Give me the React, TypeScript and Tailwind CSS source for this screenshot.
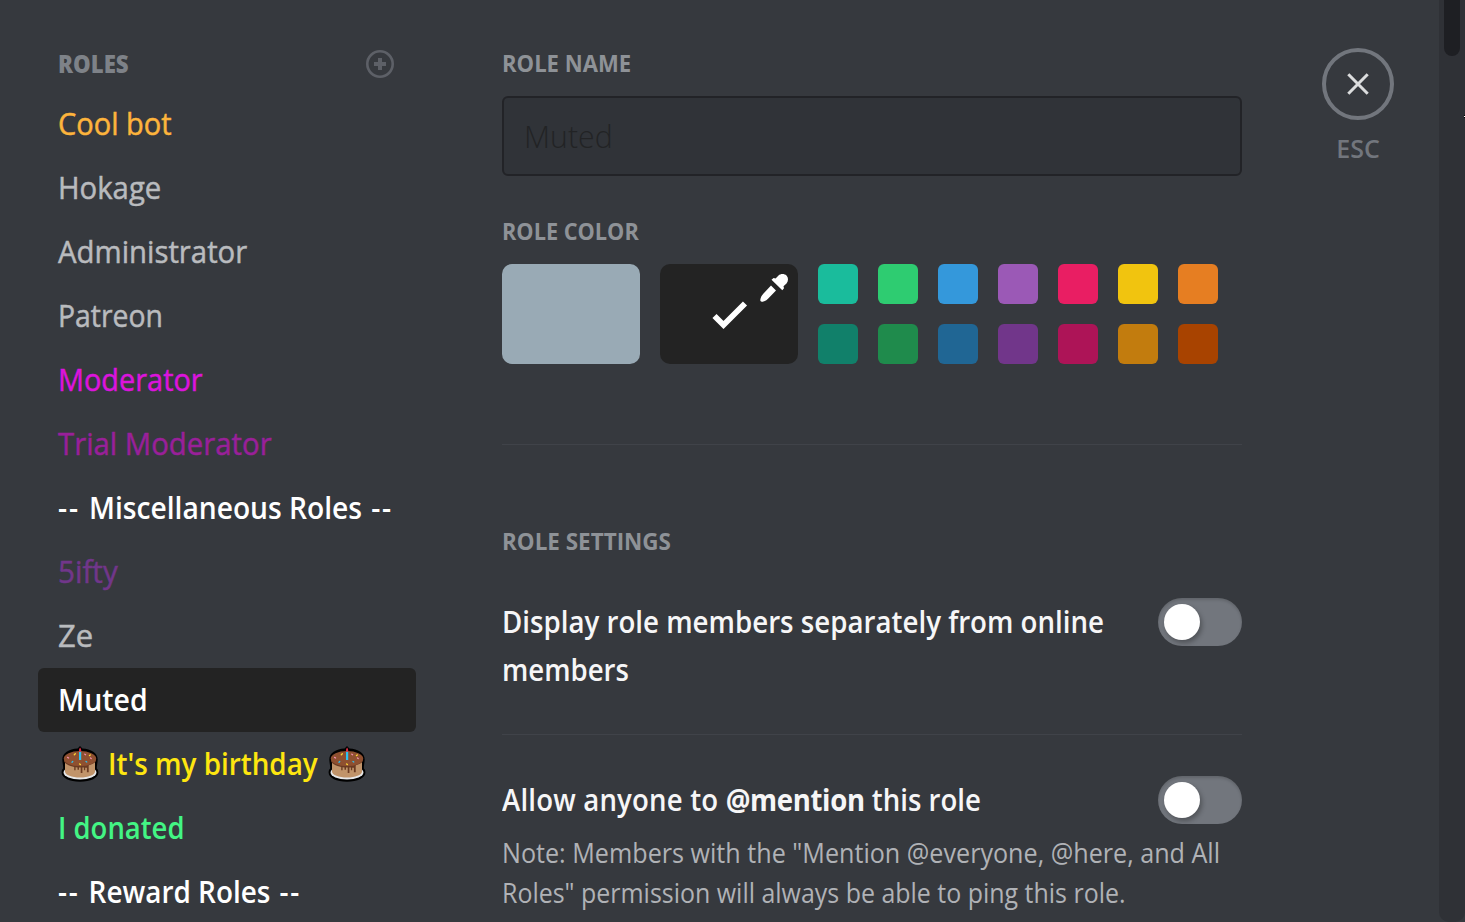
import React from "react";

type Role = { name: string; className: string; fit: string; cake?: boolean; divider?: boolean; selected?: boolean };

const regular = "[-webkit-text-stroke:0.5px_currentColor] ";

const roles: Role[] = [
  { name: "Cool bot", className: "text-[#fdb43c]", fit: regular + "scale-x-[0.935]" },
  { name: "Hokage", className: "text-[#b9bbbe]", fit: regular + "scale-x-[0.945]" },
  { name: "Administrator", className: "text-[#b9bbbe]", fit: regular + "scale-x-[0.946]" },
  { name: "Patreon", className: "text-[#b9bbbe]", fit: regular + "scale-x-[0.915]" },
  { name: "Moderator", className: "text-[#dc14dc]", fit: regular + "scale-x-[0.932]" },
  { name: "Trial Moderator", className: "text-[#992099]", fit: regular + "scale-x-[0.946]" },
  { name: "Miscellaneous Roles", className: "text-white font-semibold", fit: "scale-x-[0.909]", divider: true },
  { name: "5ifty", className: "text-[#71368a]", fit: regular + "scale-x-[0.955]" },
  { name: "Ze", className: "text-[#b9bbbe]", fit: regular },
  { name: "Muted", className: "text-white font-semibold", fit: "scale-x-[0.918]", selected: true },
  { name: "It's my birthday", className: "text-[#fee610] font-semibold", fit: "scale-x-[0.897]", cake: true },
  { name: "I donated", className: "text-[#43f584] font-semibold", fit: "scale-x-[0.886]" },
  { name: "Reward Roles", className: "text-white font-semibold", fit: "scale-x-[0.9]", divider: true },
];

const swatches = [
  "bg-[#1abc9c]", "bg-[#2ecc71]", "bg-[#3498db]", "bg-[#9b59b6]", "bg-[#e91e63]", "bg-[#f1c40f]", "bg-[#e67e22]",
  "bg-[#11806a]", "bg-[#1f8b4c]", "bg-[#206694]", "bg-[#71368a]", "bg-[#ad1457]", "bg-[#c27c0e]", "bg-[#a84300]",
];

function Cake() {
  return (
    <svg viewBox="0 0 38 38" className="mt-0.5 h-[38px] w-[38px] shrink-0">
      <path
        d="M19 1 16.600 3.500C8 4 1.300 8 1.300 14.500c0 3 .9 5 .9 9C1 24.500.6 26 .6 27.500.6 33 8.500 36.700 19 36.700S37.400 33 37.400 27.500c0-1.500-.4-3-1.600-4 0-4 .9-6 .9-9 0-6.500-6.700-10.500-15.300-11Z"
        fill="#000"
      />
      <ellipse cx="19" cy="27.500" rx="16.400" ry="7" fill="#e6e7e8" />
      <path d="M4 15v11.500c0 3.500 6.800 6 15 6s15-2.500 15-6V15Z" fill="#c1946a" />
      <path d="M3 14.500v2c1 2 3.500 3.600 6.500 4.400l3.700 1v3.300h1.400v-3l1.900.2v2.300H18v-2.300h1.700v5.500h1.700v-5.300h1.500v2.600h1.300v-2.500h1.700v4.500h1.800v-6.800l.8-.4c3-1 6.500-2.500 6.500-4.600v-1.900Z" fill="#6b3b22" />
      <ellipse cx="19" cy="13.600" rx="16.200" ry="7.500" fill="#8f5030" />
      <path d="M18 6.500h2.200v8.500H18z" fill="#2cc3f3" />
      <path d="M19.100 2.600c-1 1.300-1.100 2.300-1.100 4.100h2.200c0-1.600-.1-2.800-1.100-4.100Z" fill="#dd2e44" />
      <g strokeWidth="1.300" strokeLinecap="round">
        <path d="m13.300 9.800 1-1M28.500 10.600l.8-.6M18.600 18.900l.8.700" stroke="#fdd835" />
        <path d="m6.600 12.400 1 .6M23.800 9.200l.8.500M29.500 13l.7.500" stroke="#f48fb1" />
        <path d="m11 17.200.8-.8M25 16.500l.8.500" stroke="#2cc3f3" />
      </g>
    </svg>
  );
}

function RoleRow({ role }: { role: Role }) {
  return (
    <div
      className={
        "flex h-16 items-center whitespace-pre rounded-md pb-0.5 pl-5 text-[31px] " +
        (role.selected ? "bg-[#232323] " : "") +
        role.className
      }
    >
      {role.cake && <span className="mr-[9px] ml-[3px] flex"><Cake /></span>}
      <span className={"origin-left " + role.fit}>
        {role.divider && <span className="tracking-[2px]">-- </span>}
        {role.name}
        {role.divider && <span className="tracking-[2px]"> --</span>}
      </span>
      {role.cake && <span className="-ml-[14px] flex"><Cake /></span>}
    </div>
  );
}

function Toggle() {
  return (
    <div className="h-12 w-[84px] shrink-0 rounded-full bg-[#72767d] p-1.5 shadow-[inset_0_2px_3px_rgba(0,0,0,0.15)]">
      <div className="h-9 w-9 rounded-full bg-white shadow-[2px_3px_5px_rgba(0,0,0,0.3)]" />
    </div>
  );
}

const label = "origin-left h-8 text-[24px] leading-[30px] font-bold text-[#8e9297] ";

export default function App() {
  return (
    <div className="relative flex h-[922px] w-[1465px] overflow-hidden bg-[#36393e] font-['Open_Sans','Noto_Sans',sans-serif]">
      <aside className="w-[416px] shrink-0 pt-12 pl-[38px]">
        <div className="mb-3 flex h-8 items-center justify-between pr-[22px] pl-5">
          <span className="origin-left scale-x-[0.925] text-[24px] leading-8 font-extrabold text-[#7e8288]">ROLES</span>
          <svg viewBox="0 0 28 28" className="h-7 w-7" fill="none" stroke="#5d6067">
            <circle cx="14" cy="14" r="12.700" strokeWidth="2.600" />
            <path d="M14 8v12M8 14h12" strokeWidth="4" />
          </svg>
        </div>
        {roles.map((role) => (
          <RoleRow key={role.name} role={role} />
        ))}
      </aside>

      <main className="ml-[86px] w-[740px] shrink-0 pt-12">
        <div className={label + "scale-x-[0.92]"}>ROLE NAME</div>
        <div className="mt-4 flex h-20 items-center rounded-md border-2 border-[#222327] bg-[#303338] pl-5 text-[31px] font-light text-[#222325]">
          <span className="origin-left scale-x-[0.975]">Muted</span>
        </div>
        <div className={label + "mt-10 scale-x-[0.905]"}>ROLE COLOR</div>
        <div className="mt-4 flex gap-5">
          <div className="h-[100px] w-[138px] rounded-[10px] bg-[#99aab5]" />
          <div className="h-[100px] w-[138px] rounded-[10px] bg-[#232323]">
            <svg viewBox="0 0 138 100" className="h-full w-full">
              <path d="m54.500 52 9 9L85 39.500" fill="none" stroke="#fff" strokeWidth="5.800" />
              <path d="M111.500 15.800 113.600 14 115.600 14.500 118.500 11.500C120.500 9.500 124.500 9.500 126.500 11.500S128.500 17 126.500 19.500L123.500 22.300 124 24.200 122.300 26.200Z" fill="#fff" />
              <path d="m111 21.500 5 5-8 8.200c-2.500 2.300-4 3-6.200 3-.9 0-1.600-.8-1.500-1.600.2-2.500 1-4.200 3.200-6.700Z" fill="#fff" />
            </svg>
          </div>
          <div className="grid grid-cols-7 gap-5">
            {swatches.map((color) => (
              <div key={color} className={"h-10 w-10 rounded-md " + color} />
            ))}
          </div>
        </div>
        <div className="mt-20 h-px bg-[#404349]" />
        <div className={label + "mt-[81px] scale-x-[0.935]"}>ROLE SETTINGS</div>
        <div className="mt-10 flex items-start border-b border-[#404349] pb-10">
          <div className="-mt-px mb-px min-w-0 grow whitespace-pre text-[31px] leading-12 font-semibold text-[#f6f6f7]">
            <div className="origin-left scale-x-[0.893]">Display role members separately from online</div>
            <div className="origin-left scale-x-[0.89]">members</div>
          </div>
          <Toggle />
        </div>
        <div className="mt-[41px] flex items-start">
          <div className="-mt-px mb-px min-w-0 grow origin-left scale-x-[0.89] whitespace-pre text-[31px] leading-12 font-semibold text-[#f6f6f7]">
            <span className="tracking-[0.2px]">Allow anyone to </span><b className="font-bold tracking-[-0.4px]">@mention</b> this role
          </div>
          <Toggle />
        </div>
        <div className="mt-[9px] whitespace-pre text-[27px] leading-10 text-[#b0b2b6]">
          <div className="origin-left scale-x-[0.931]">Note: Members with the "Mention @everyone, @here, and All</div>
          <div className="origin-left scale-x-[0.924]">Roles" permission will always be able to ping this role.</div>
        </div>
      </main>

      <div className="ml-20 flex w-[72px] shrink-0 flex-col items-center pt-12">
        <div className="flex h-[72px] w-[72px] items-center justify-center rounded-full border-4 border-[#72767d]">
          <svg viewBox="0 0 22 22" className="h-[22px] w-[22px]" stroke="#dcddde" strokeWidth="3">
            <path d="m1.300 1.300 19.400 19.400M20.700 1.300 1.300 20.700" />
          </svg>
        </div>
        <div className="mt-3 text-[25px] leading-8 font-semibold text-[#72767d]">ESC</div>
      </div>

      <div className="ml-[45px] h-full w-[26px] shrink-0 rounded-b-[10px] bg-[#2f3136] pl-[5px]">
        <div className="h-14 w-4 rounded-b-full bg-[#1e1f23]" />
      </div>
      <div className="absolute top-[115px] right-0 h-[3px] w-px border-y border-black bg-white" />
    </div>
  );
}
